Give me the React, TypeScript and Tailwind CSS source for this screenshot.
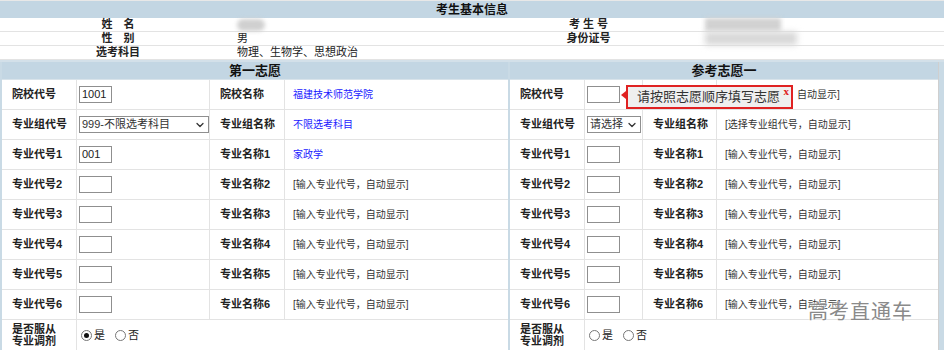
import { ChevronDown } from "lucide-react";

const font = "font-['Liberation_Sans','Noto_Sans_CJK_SC',sans-serif]";

function Input({ value }: { value?: string }) {
  return (
    <div className="w-[33px] h-[17px] border border-[#8f8f8f] bg-white text-[11px] leading-[15px] pl-[2px] text-[#222]">
      {value}
    </div>
  );
}

function Select({ text, width }: { text: string; width: string }) {
  return (
    <div
      className={`${width} h-[17px] border border-[#8f8f8f] bg-white flex items-center justify-between pl-[2px] pr-[2px] text-[11px] text-[#333]`}
    >
      <span className="whitespace-nowrap">{text}</span>
      <ChevronDown className="w-[12px] h-[12px] text-[#333]" strokeWidth={2.5} />
    </div>
  );
}

function Radio({ checked, label }: { checked?: boolean; label: string }) {
  return (
    <span className="flex items-center gap-[2px] text-[11px] text-[#222]">
      <span className="w-[11px] h-[11px] rounded-full border border-[#777] bg-white flex items-center justify-center">
        {checked && <span className="w-[5px] h-[5px] rounded-full bg-[#111]" />}
      </span>
      {label}
    </span>
  );
}

type Row = { label: string; field: React.ReactNode; label2: string; value: React.ReactNode };

function Panel({
  title,
  cols,
  rows,
  radioChecked,
}: {
  title: string;
  cols: string;
  rows: Row[];
  radioChecked: boolean;
}) {
  return (
    <div className="flex flex-col bg-white">
      <div className="h-[18px] bg-[#c3d6e3] text-center text-[13px] leading-[18px] font-bold text-[#111] border-b border-[#d8e3ea]">
        {title}
      </div>
      {rows.map((r, i) => (
        <div key={i} className={`grid ${cols} h-[30px] border-b border-[#e3e3e3]`}>
          <div className="flex items-center pl-[10px] text-[11px] font-bold text-[#222] border-r border-[#e3e3e3]">
            {r.label}
          </div>
          <div className="flex items-center pl-[2px] border-r border-[#e3e3e3]">{r.field}</div>
          <div className="flex items-center pl-[10px] text-[11px] font-bold text-[#222] border-r border-[#e3e3e3]">
            {r.label2}
          </div>
          <div className="flex items-center pl-[8px] text-[10px] whitespace-nowrap overflow-hidden">{r.value}</div>
        </div>
      ))}
      <div className={`grid ${cols} h-[30px]`}>
        <div className="flex flex-col justify-center pl-[10px] text-[11px] leading-[12px] font-bold text-[#222] border-r border-[#e3e3e3]">
          <span>是否服从</span>
          <span>专业调剂</span>
        </div>
        <div className="col-span-3 flex items-center gap-[10px] pl-[4px]">
          <Radio checked={radioChecked} label="是" />
          <Radio label="否" />
        </div>
      </div>
    </div>
  );
}

const hint = <span className="text-[#333]">[输入专业代号，自动显示]</span>;

export default function App() {
  const leftRows: Row[] = [
    { label: "院校代号", field: <Input value="1001" />, label2: "院校名称", value: <span className="text-[#1a1aff]">福建技术师范学院</span> },
    { label: "专业组代号", field: <Select text="999-不限选考科目" width="w-[130px]" />, label2: "专业组名称", value: <span className="text-[#1a1aff]">不限选考科目</span> },
    { label: "专业代号1", field: <Input value="001" />, label2: "专业名称1", value: <span className="text-[#1a1aff]">家政学</span> },
    ...[2, 3, 4, 5, 6].map((n) => ({ label: `专业代号${n}`, field: <Input />, label2: `专业名称${n}`, value: hint })),
  ];
  const rightRows: Row[] = [
    // 提示框盖住了前半段，只留 "自动显示]"
    { label: "院校代号", field: <Input />, label2: "院校名称", value: <span className="pl-[72px] text-[#333]">自动显示]</span> },
    { label: "专业组代号", field: <Select text="请选择" width="w-[54px]" />, label2: "专业组名称", value: <span className="text-[#333]">[选择专业组代号，自动显示]</span> },
    ...[1, 2, 3, 4, 5, 6].map((n) => ({ label: `专业代号${n}`, field: <Input />, label2: `专业名称${n}`, value: hint })),
  ];

  return (
    <div className={`relative w-[944px] h-[350px] overflow-hidden bg-white ${font}`}>
      {/* 考生基本信息 */}
      <div className="h-[18px] bg-[#c3d6e3] text-center text-[12px] leading-[18px] font-bold text-[#111] border-t border-[#e8e8e8]">
        考生基本信息
      </div>
      <div className="text-[11px] text-[#222]">
        {[
          ["姓　名", <span className="inline-block w-[28px] h-[12px] rounded-full bg-[#d0d0d0] blur-[2px]" />, "考 生 号", <span className="inline-block w-[76px] h-[13px] bg-[#d2d2d2] blur-[2px]" />],
          ["性　别", "男", "身份证号", <span className="inline-block w-[92px] h-[13px] bg-[#d8d8d8] blur-[3px]" />],
          ["选考科目", "物理、生物学、思想政治", "", ""],
        ].map((r, i) => (
          <div key={i} className="grid grid-cols-[236px_236px_233px_1fr] h-[14px] leading-[13px] border-b border-[#e3e3e3]">
            <div className="text-center font-bold">{r[0]}</div>
            <div className="pl-[1px] flex items-center">{r[1]}</div>
            <div className="text-center font-bold">{r[2]}</div>
            <div className="flex items-center">{r[3]}</div>
          </div>
        ))}
      </div>
      <div className="h-[2px] bg-[#d3e0e9]" />

      {/* 志愿 */}
      <div className="flex bg-[#c9dae5] pl-[2px] pr-[5px] gap-[2px]">
        <div className="w-[506px]">
          <Panel title="第一志愿" cols="grid-cols-[75px_133px_75px_1fr]" rows={leftRows} radioChecked />
        </div>
        <div className="flex-1 border-r border-[#cfcfcf]">
          <Panel title="参考志愿一" cols="grid-cols-[75px_58px_74px_1fr]" rows={rightRows} radioChecked={false} />
        </div>
      </div>

      {/* 提示框 */}
      <div className="absolute left-[626px] top-[85px] w-[167px] h-[24px] border-2 border-[#e02222] bg-[#efefef] flex items-center pl-[9px] text-[13px] text-[#333]">
        请按照志愿顺序填写志愿
        <span className="absolute right-[2px] top-[-4px] text-[11px] font-bold text-[#e02222] font-['Liberation_Serif',serif]">x</span>
        <span className="absolute left-[-7px] top-[4px] w-0 h-0 border-y-[4px] border-y-transparent border-r-[5px] border-r-[#e02222]" />
      </div>

      {/* 水印 */}
      <div className="absolute left-[808px] top-[296px] text-[20px] tracking-[1px] text-[#8a8a8a] font-['Noto_Sans_CJK_SC',sans-serif] [text-shadow:0_0_2px_#fff,0_0_2px_#fff]">
        高考直通车
      </div>
    </div>
  );
}
